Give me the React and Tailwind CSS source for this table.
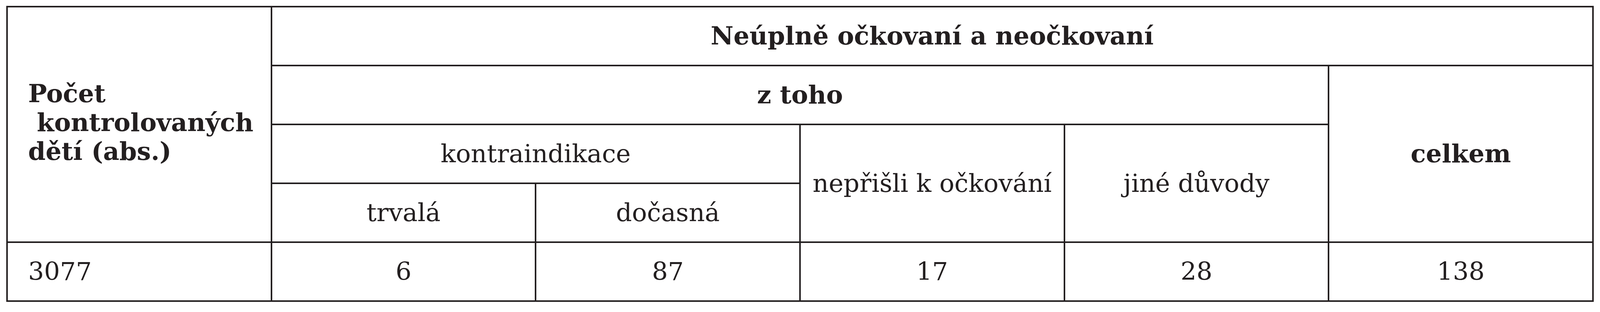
import React from "react";

// shared cell look: heavy dark rules, centred text
const cell = "border-4 border-[#231f20] text-center align-middle";

export default function App() {
  return (
    <div className="bg-white w-full h-[800px] px-[16px] pt-[15px] text-[#231f20] font-['DejaVu_Serif',serif] text-[64px] leading-[1.1]">
      <table className="table-fixed border-collapse w-full">
        <colgroup>
          <col className="w-1/6" />
          <col className="w-1/6" />
          <col className="w-1/6" />
          <col className="w-1/6" />
          <col className="w-1/6" />
          <col className="w-1/6" />
        </colgroup>
        <tbody>
          <tr className="h-[151px]">
            <td rowSpan={4} className="border-4 border-[#231f20] align-middle text-left pl-[52px] pb-[10px] font-bold leading-[74px]">
              <div>Počet</div>
              <div>{"\u00a0"}kontrolovaných</div>
              <div>dětí (abs.)</div>
            </td>
            <td colSpan={5} className={`${cell} font-bold`}>
              Neúplně očkovaní a neočkovaní
            </td>
          </tr>
          <tr className="h-[151px]">
            <td colSpan={4} className={`${cell} font-bold`}>
              z toho
            </td>
            <td rowSpan={3} className={`${cell} font-bold`}>
              celkem
            </td>
          </tr>
          <tr className="h-[151px]">
            <td colSpan={2} className={cell}>
              kontraindikace
            </td>
            <td rowSpan={2} className={cell}>
              nepřišli k očkování
            </td>
            <td rowSpan={2} className={cell}>
              jiné důvody
            </td>
          </tr>
          <tr className="h-[151px]">
            <td className={cell}>trvalá</td>
            <td className={cell}>dočasná</td>
          </tr>
          <tr className="h-[151px]">
            <td className="border-4 border-[#231f20] text-left align-middle pl-[52px]">3077</td>
            <td className={cell}>6</td>
            <td className={cell}>87</td>
            <td className={cell}>17</td>
            <td className={cell}>28</td>
            <td className={cell}>138</td>
          </tr>
        </tbody>
      </table>
    </div>
  );
}
